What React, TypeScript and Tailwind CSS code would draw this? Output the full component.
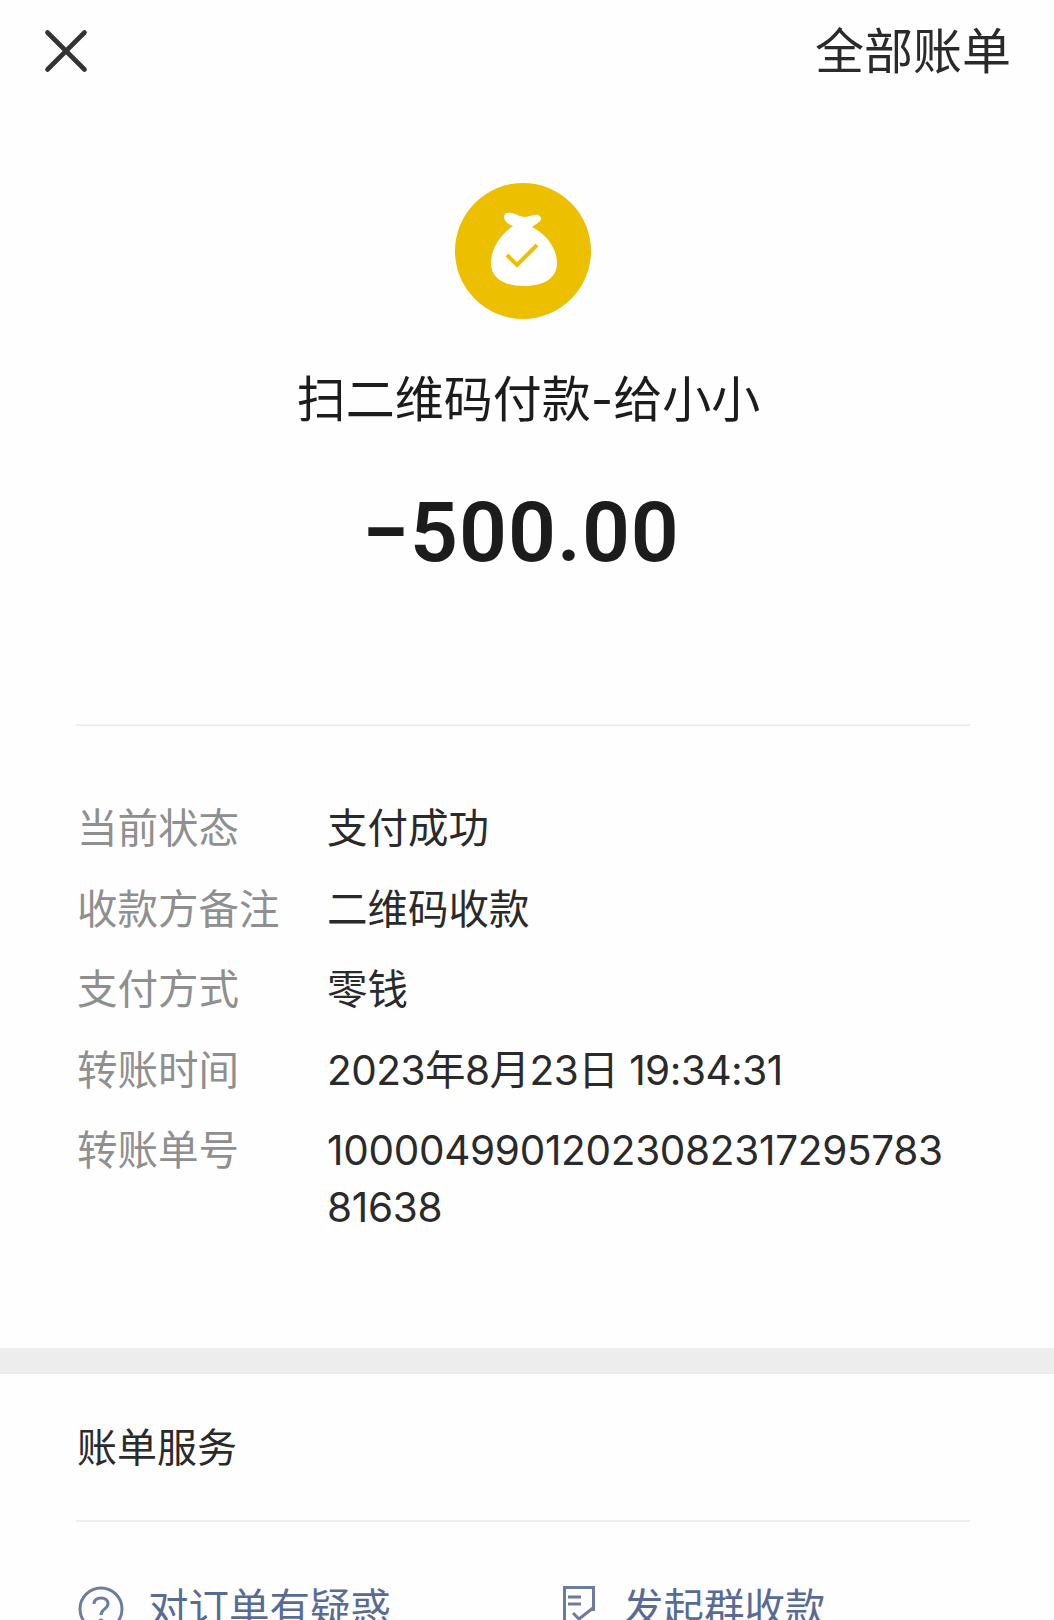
import { X } from 'lucide-react';

const cjk = "font-['Inter','Noto_Sans_CJK_SC',sans-serif]";

const rows = [
  { label: '当前状态', value: ['支付成功'], tracking: '' },
  { label: '收款方备注', value: ['二维码收款'], tracking: '' },
  { label: '支付方式', value: ['零钱'], tracking: '' },
  { label: '转账时间', value: ['2023年8月23日 19:34:31'], tracking: 'tracking-[-0.5px]' },
  { label: '转账单号', value: ['10000499012023082317295783', '81638'], tracking: 'tracking-[-0.3px]' },
];

function BagIcon() {
  return (
    <svg viewBox="0 0 136 136" className="h-[136px] w-[136px]">
      <circle cx="68" cy="68" r="68" fill="#ecbf00" />
      <path
        d="M58 43C52 41 49 37 49 34C49 30 53 29 57 30C62 31 65 34 70 34C75 34 79 31 83 32C86 33 87 36 85 38C82 41 79 42 77 44C91 51 102 65 102 80C102 97 86 103 69 103C52 103 36 97 36 80C36 65 46 51 58 43Z"
        fill="#ffffff"
      />
      <path d="M52 72l10 10 20-20" fill="none" stroke="#ecbf00" strokeWidth="4" />
    </svg>
  );
}

function QuestionIcon() {
  return (
    <svg viewBox="0 0 46 46" className="h-[46px] w-[46px]" fill="none" stroke="#6b7c9f" strokeWidth="3">
      <circle cx="23" cy="23" r="21" />
      <path d="M16 18c0-4 3-6 7-6s7 2 7 6c0 5-7 5-7 11" />
      <circle cx="23" cy="35" r="1" />
    </svg>
  );
}

function BillIcon() {
  return (
    <svg viewBox="0 0 32 46" className="h-[46px] w-[32px]" fill="none" stroke="#6b7c9f" strokeWidth="3">
      <path d="M30.5 25V1.5H1.500V44.500H14" />
      <path d="M5 11h13M5 18h13" />
      <path d="M10 27l6 6 14-11" />
    </svg>
  );
}

export default function App() {
  return (
    <div className={`h-[1620px] w-[1054px] overflow-hidden bg-[#fefefe] text-[#1c1c1c] ${cjk}`}>
      <div className="flex h-[104px] items-center justify-between pl-[29px] pr-[43px] pb-[2px]">
        <X size={74} strokeWidth={1.5} color="#333333" />
        <span className="text-[49px] leading-none text-[#2a2a2a]">全部账单</span>
      </div>

      <div className="mt-[79px] flex justify-center pr-[8px]">
        <BagIcon />
      </div>

      <div className="mt-[46px] pl-[3px] text-center text-[49px] leading-[70px]">扫二维码付款-给小小</div>

      <div className="mt-[48px] pr-[12px] text-center font-['Roboto',sans-serif] text-[84px] font-semibold leading-[100px] tracking-[1px]">
        −500.00
      </div>

      <div className="ml-[76px] mr-[84px] mt-[141px] h-[2px] bg-[#ededed]" />

      <div className="mt-[74px] flex flex-col gap-[23.5px] pl-[77px] text-[40.5px] leading-[57px]">
        {rows.map((row) => (
          <div key={row.label} className="flex">
            <div className="w-[250px] shrink-0 text-[#8f8f8f]">{row.label}</div>
            <div className={`text-[#2a2a2a] ${row.tracking}`}>
              {row.value.map((line) => (
                <div key={line}>{line}</div>
              ))}
            </div>
          </div>
        ))}
      </div>

      <div className="mt-[112px] h-[26px] bg-[#ededed]" />

      <div className="pl-[77px] pt-[45px] text-[40px] leading-[57px] text-[#2a2a2a]">账单服务</div>

      <div className="ml-[76px] mr-[84px] mt-[44px] h-[2px] bg-[#ededed]" />

      <div className="mt-[58px] flex pl-[78px] text-[40.5px] leading-[57px] text-[#576b95]">
        <div className="flex w-[485px] items-center gap-[24px]">
          <QuestionIcon />
          <span>对订单有疑惑</span>
        </div>
        <div className="flex items-center gap-[28px]">
          <BillIcon />
          <span>发起群收款</span>
        </div>
      </div>
    </div>
  );
}
